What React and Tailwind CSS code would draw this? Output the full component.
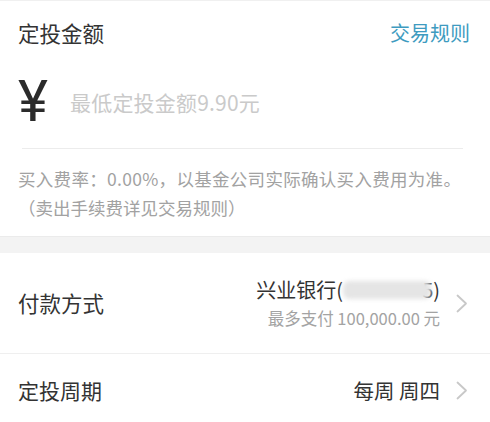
import React from "react";

const cjk = { fontFamily: '"Noto Sans CJK SC", "Noto Sans", sans-serif' };

function Chevron() {
  return (
    <svg width="12" height="19" viewBox="0 0 12 19" className="shrink-0">
      <path d="M1.5 1.5 L10 9.5 L1.5 17.5" fill="none" stroke="#c8c8c8" strokeWidth="1.8" strokeLinecap="round" strokeLinejoin="round" />
    </svg>
  );
}

export default function App() {
  return (
    <div className="w-[490px] h-[422px] overflow-hidden bg-white text-[#333333] border-t border-[#f0f0f0]" style={cjk}>
      {/* header */}
      <div className="h-[64px] flex items-center justify-between pl-[18px] pr-[20px]">
        <span className="text-[21.5px] leading-[28px]">定投金额</span>
        <span className="text-[20px] leading-[28px] text-[#3e9bc0]">交易规则</span>
      </div>

      {/* amount input */}
      <div className="h-[73px] flex items-center pl-[18px]">
        <span className="text-[57px] leading-none text-[#2b2b2b] w-[28px]" style={{ fontFamily: 'Roboto, "Noto Sans", sans-serif' }}>¥</span>
        <span className="ml-[24px] text-[21px] leading-[28px] text-[#cacaca] tracking-[0.2px]">最低定投金额9.90元</span>
      </div>
      <div className="mt-[10px] ml-[22px] mr-[27px] h-px bg-[#ececec]" />

      {/* fee text */}
      <div className="pt-[15px] pb-[14px] pl-[18px] text-[17.5px] leading-[29px] text-[#a2a2a2]">
        <div className="whitespace-nowrap tracking-[0.3px]">买入费率：0.00%，以基金公司实际确认买入费用为准。</div>
        <div className="whitespace-nowrap">（卖出手续费详见交易规则）</div>
      </div>

      {/* gray band */}
      <div className="h-[17px] bg-[#f3f3f3] border-t border-[#ebebeb]" />

      {/* payment method */}
      <div className="h-[100px] flex items-center justify-between pl-[18px] pr-[22px]">
        <span className="text-[21.5px] leading-[28px]">付款方式</span>
        <div className="flex items-center gap-[16px]">
          <div className="flex flex-col items-end">
            <div className="flex items-center text-[20px] leading-[26px] whitespace-nowrap">
              <span>兴业银行(</span>
              <span className="relative z-10 inline-block w-[88px] h-[18px] -mr-[9px] rounded-[6px] bg-[#e5e5e5] blur-[2px]" />
              <span>5)</span>
            </div>
            <div className="mt-[4px] text-[16.5px] leading-[22px] text-[#a3a3a3] whitespace-nowrap">最多支付 100,000.00 元</div>
          </div>
          <Chevron />
        </div>
      </div>
      <div className="h-px bg-[#efefef]" />

      {/* period */}
      <div className="h-[72px] flex items-center justify-between pl-[18px] pr-[22px]">
        <span className="text-[21px] leading-[28px]">定投周期</span>
        <div className="flex items-center gap-[16px]">
          <span className="text-[20.5px] leading-[28px] whitespace-nowrap">每周 周四</span>
          <Chevron />
        </div>
      </div>
    </div>
  );
}
